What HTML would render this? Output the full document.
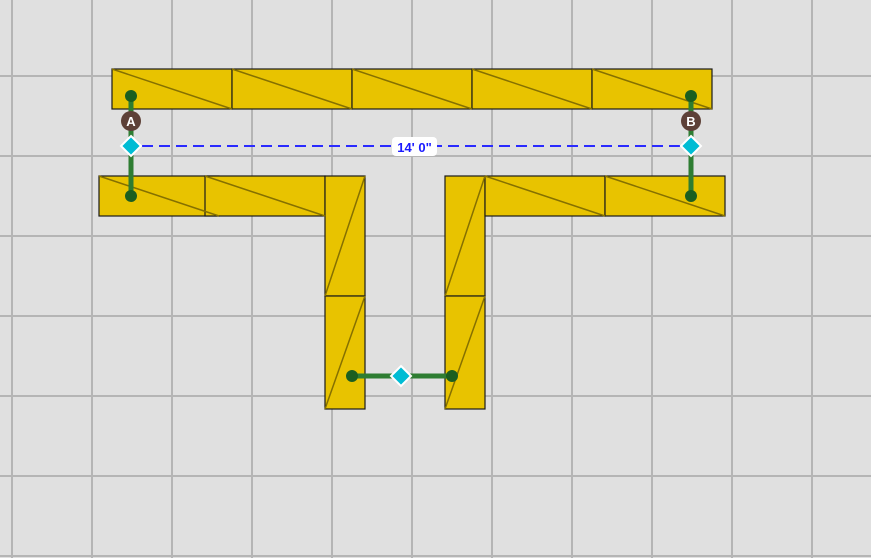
<!DOCTYPE html><html><head><style>html,body{margin:0;padding:0;background:#e0e0e0}</style></head><body>
<svg width="871" height="558" xmlns="http://www.w3.org/2000/svg" style="display:block">
<defs>
<pattern id="g" x="11" y="-5" width="80" height="80" patternUnits="userSpaceOnUse">
<path d="M1 0V80M0 1H80" stroke="#b5b5b5" stroke-width="2" fill="none"/>
</pattern>
</defs>
<rect width="871" height="558" fill="#e0e0e0"/>
<rect width="871" height="558" fill="url(#g)"/>
<g stroke="#1a1a1a" stroke-width="1.2" fill="#e8c300">
<rect x="112" y="69" width="120" height="40"/><rect x="232" y="69" width="120" height="40"/><rect x="352" y="69" width="120" height="40"/><rect x="472" y="69" width="120" height="40"/><rect x="592" y="69" width="120" height="40"/>
<rect x="99" y="176" width="120" height="40"/>
<rect x="205" y="176" width="120" height="40"/>
<rect x="325" y="176" width="40" height="120"/>
<rect x="325" y="296" width="40" height="113"/>
<rect x="445" y="176" width="40" height="120"/>
<rect x="445" y="296" width="40" height="113"/>
<rect x="485" y="176" width="120" height="40"/>
<rect x="605" y="176" width="120" height="40"/>
</g>
<g stroke="#857000" stroke-width="1.5">
<path d="M112 69L232 109M232 69L352 109M352 69L472 109M472 69L592 109M592 69L712 109M99 176L219 216M205 176L325 216M485 176L605 216M605 176L725 216M325 296L365 176M325 409L365 296M445 296L485 176M445 409L485 296"/>
</g>
<line x1="142" y1="146" x2="684" y2="146" stroke="#2a2aff" stroke-width="2" stroke-dasharray="11,6"/>
<g stroke="#2e7d32" stroke-width="5">
<line x1="131" y1="96" x2="131" y2="196"/><line x1="691" y1="96" x2="691" y2="196"/><line x1="352" y1="376" x2="452" y2="376"/>
</g>
<g fill="#1b5e20">
<circle cx="131" cy="96" r="6"/><circle cx="131" cy="196" r="6"/><circle cx="691" cy="96" r="6"/><circle cx="691" cy="196" r="6"/><circle cx="352" cy="376" r="6"/><circle cx="452" cy="376" r="6"/>
</g>
<g fill="#5d4037"><circle cx="131" cy="121" r="10"/><circle cx="691" cy="121" r="10"/></g>
<g fill="#fff" font-family="Liberation Sans, sans-serif" font-weight="bold" font-size="13" text-anchor="middle">
<text x="131" y="126">A</text><text x="691" y="126">B</text>
</g>
<g fill="#00bcd4" stroke="#fff" stroke-width="2">
<path d="M131 136L141 146L131 156L121 146Z"/><path d="M691 136L701 146L691 156L681 146Z"/><path d="M401 366L411 376L401 386L391 376Z"/>
</g>
<rect x="392" y="137" width="45" height="19" rx="4" fill="#fff"/>
<text x="414.5" y="152" fill="#1a1aff" font-family="Liberation Sans, sans-serif" font-weight="bold" font-size="13" text-anchor="middle">14' 0"</text>
</svg>
</body></html>
